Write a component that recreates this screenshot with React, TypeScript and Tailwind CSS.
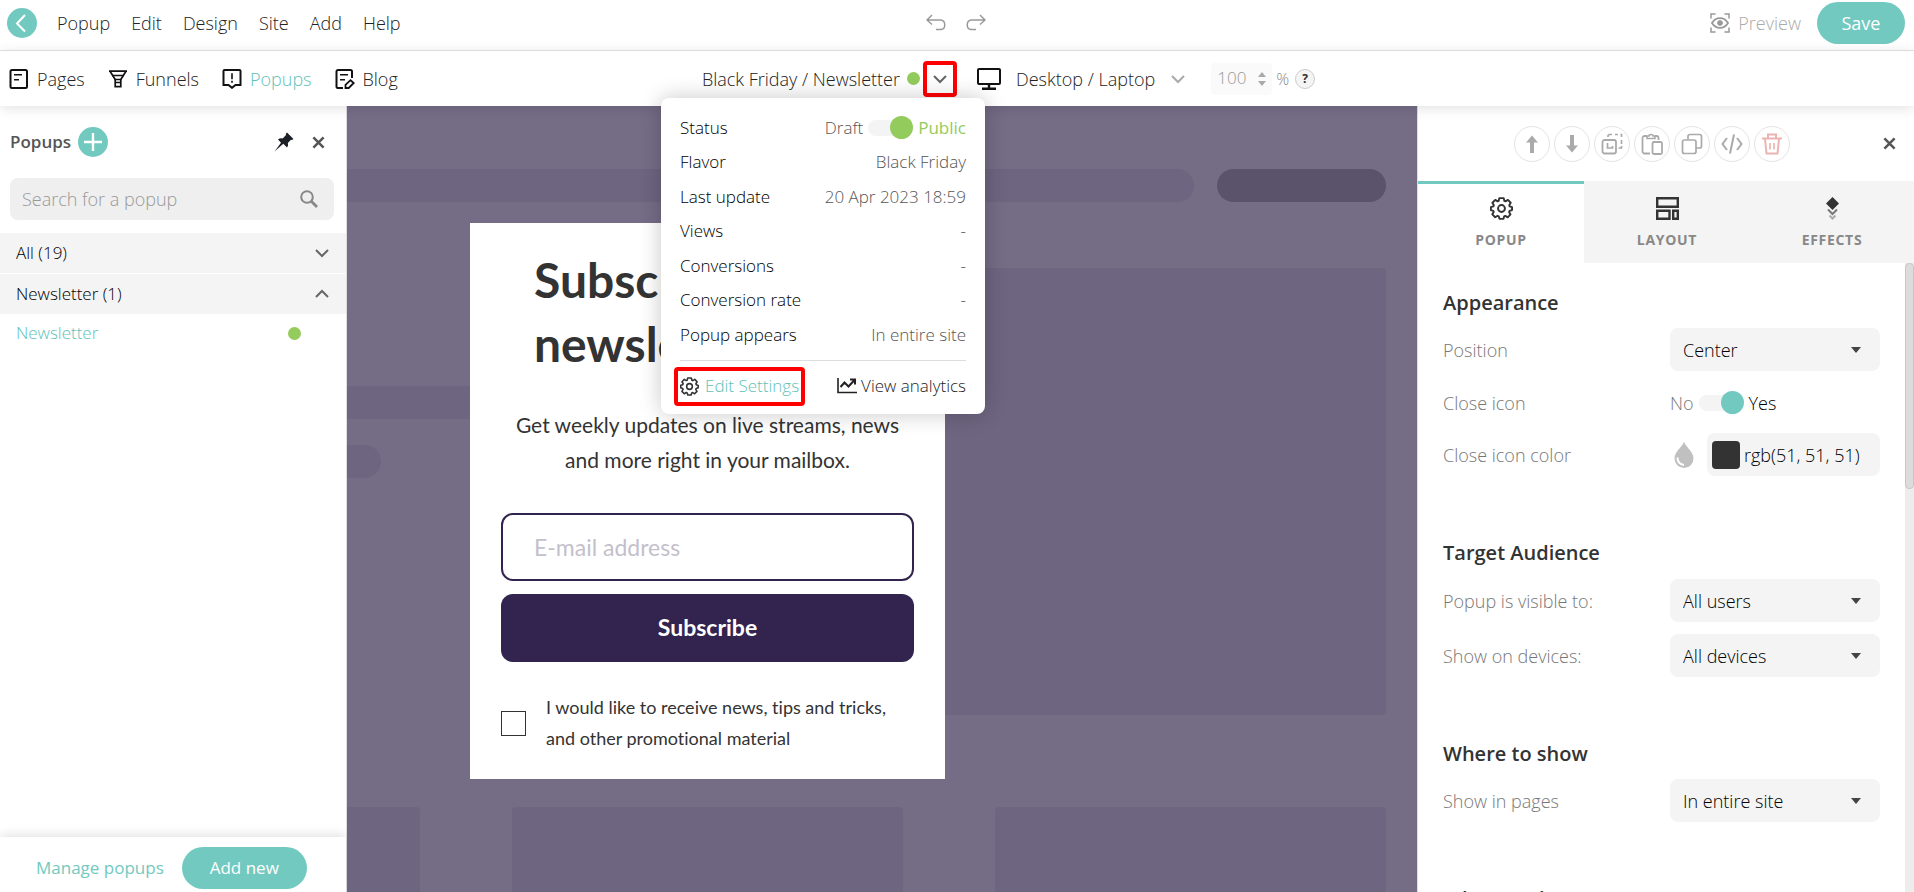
import { useState } from 'react';
import type { ReactNode } from 'react';

const menuItems = ['Popup', 'Edit', 'Design', 'Site', 'Add', 'Help'];

const stats = [
  { label: 'Flavor', value: 'Black Friday' },
  { label: 'Last update', value: '20 Apr 2023 18:59' },
  { label: 'Views', value: '-' },
  { label: 'Conversions', value: '-' },
  { label: 'Conversion rate', value: '-' },
  { label: 'Popup appears', value: 'In entire site' },
];

type IconProps = { className?: string; children: ReactNode; viewBox?: string };

function Icon({ className = 'size-5', children, viewBox = '0 0 20 20' }: IconProps) {
  return (
    <svg
      viewBox={viewBox}
      className={`shrink-0 ${className}`}
      fill="none"
      stroke="currentColor"
      strokeWidth="2"
      aria-hidden="true"
    >
      {children}
    </svg>
  );
}

function PagesIcon() {
  return (
    <Icon>
      <rect x="1.5" y="1" width="16.5" height="18" rx="1.5" />
      <path d="M5 5.8h8M5 10.8h5" strokeWidth="1.6" />
    </Icon>
  );
}

function FunnelIcon() {
  return (
    <Icon>
      <path d="M1 2.2h18M2.2 2.5l5 8v7.2h5.6v-7.2l5-8" strokeWidth="1.7" />
      <path d="M4 6.4h12M6.5 10.5h7M7.2 13.6h5.6" strokeWidth="1.5" />
    </Icon>
  );
}

function PopupIcon() {
  return (
    <Icon>
      <path d="M2.5 1h15c.6 0 1 .4 1 1v14h-5L10 18.8 6.500 16h-5V2c0-.6.4-1 1-1z" />
      <path d="M10 4.200v6M10 11.800v1.900" strokeWidth="1.600" />
    </Icon>
  );
}

function BlogIcon() {
  return (
    <Icon>
      <path d="M8 19H3a1.500 1.500 0 0 1-1.500-1.500v-15A1.500 1.500 0 0 1 3 1h12.500A1.500 1.500 0 0 1 17 2.500V9" />
      <path d="M5 5.800h8M5 10.800h5" strokeWidth="1.600" />
      <path d="M10.500 19v-3.200l5-4.600 3.200 2.800-5 5z" strokeWidth="1.800" />
    </Icon>
  );
}

function GearIcon({ className }: { className?: string }) {
  return (
    <Icon className={className} viewBox="0 0 24 24">
      <path
        d="M9.700 1.200h4.600l.7 2.900 1.100.5 2.600-1.600 2.900 3-1.500 2.500.4 1.300 2.500.8v3l-2.600.9-.5 1.200 1.500 2.500-2.900 3-2.500-1.500-1.200.5-.7 2.600H9.900l-.8-2.700-1.200-.5-2.500 1.500-3-3 1.500-2.500-.5-1.100-2.500-.8v-3.200l2.600-.8.5-1.200-1.500-2.500 3-3 2.500 1.500 1.100-.5z"
        strokeLinejoin="round"
      />
      <circle cx="12" cy="12" r="3.600" />
    </Icon>
  );
}

function Chevron({ up = false, className = '' }: { up?: boolean; className?: string }) {
  return (
    <Icon className={`w-3.5 h-2.5 ${className}`} viewBox="0 0 14 10">
      <path d={up ? 'M1 8l6-6 6 6' : 'M1 2l6 6 6-6'} />
    </Icon>
  );
}

function CloseIcon() {
  return (
    <Icon className="size-[13px]" viewBox="0 0 14 14">
      <path d="M1.500 1.500l11 11M12.500 1.500l-11 11" strokeWidth="2.700" />
    </Icon>
  );
}

type ToggleProps = { label: string; checked: boolean; onChange: (v: boolean) => void; color: string };

function Toggle({ label, checked, onChange, color }: ToggleProps) {
  return (
    <span className="relative flex items-center w-[45px] h-6">
      <input
        type="checkbox"
        role="switch"
        aria-label={label}
        checked={checked}
        onChange={(e) => onChange(e.target.checked)}
        className="appearance-none w-9 h-4 rounded-full bg-[#f4f4f4]"
      />
      <span
        className={`pointer-events-none absolute size-[23px] rounded-full ${color} ${checked ? 'right-0' : 'left-0'}`}
      />
    </span>
  );
}

function TopBar() {
  return (
    <header className="flex items-center h-[51px] pb-1 border-b border-[#e4e4e4]">
      <div className="flex-1 flex items-center pl-[7px] gap-5">
        <button aria-label="Back" className="size-[30px] rounded-full bg-[#72c9c0] text-white flex items-center justify-center">
          <Icon className="size-5">
            <path d="M13 2L5 10.500l8 8" />
          </Icon>
        </button>
        <nav className="flex gap-[21px] text-[#222]">
          {menuItems.map((item) => (
            <button key={item}>{item}</button>
          ))}
        </nav>
      </div>
      <div className="flex gap-5 text-[#999]">
        <button aria-label="Undo">
          <Icon>
            <path d="M6 2L1 7l5 4.500M1.500 7H15c5 1 5 9 0 9.500H10" strokeWidth="1.500" />
          </Icon>
        </button>
        <button aria-label="Redo">
          <Icon>
            <path d="M14 2l5 5-5 4.500M18.500 7H5C0 8 0 16 5 16.500h5" strokeWidth="1.500" />
          </Icon>
        </button>
      </div>
      <div className="flex-1 flex items-center justify-end gap-4 pr-[9px]">
        <button className="flex items-center gap-2 text-[#aaa]">
          <Icon className="size-5 text-[#999]">
            <path d="M1 5.500V1h4.500M14.500 1H19v4.500M19 14.500V19h-4.500M5.500 19H1v-4.500" strokeWidth="1.500" />
            <path d="M2 10c4-6.500 12-6.500 16 0-4 6.500-12 6.500-16 0z" strokeWidth="1.800" />
            <circle cx="10" cy="10" r="2.400" fill="currentColor" strokeWidth="1" />
          </Icon>
          Preview
        </button>
        <button className="h-[42px] w-[88px] rounded-full bg-[#72c9c0] text-white font-normal">Save</button>
      </div>
    </header>
  );
}

function StatusMenu() {
  const [isPublic, setIsPublic] = useState(true);

  return (
    <div className="absolute top-full mt-px -right-7 z-20 w-[324px] h-[316px] px-[19px] pt-[13px] rounded-lg bg-white text-[17px] shadow-[0_0_22px_rgba(0,0,0,0.22)]">
      <dl className="grid auto-rows-fr h-[242px] text-black">
        <div className="flex items-center justify-between">
          <dt>Status</dt>
          <dd className="flex items-center gap-[5px] text-[#555]">
            Draft
            <Toggle label="Public" checked={isPublic} onChange={setIsPublic} color="bg-[#93cb5d]" />
            <span className="font-normal text-[#93cb5d]">Public</span>
          </dd>
        </div>
        {stats.map((row) => (
          <div key={row.label} className="flex items-center justify-between">
            <dt>{row.label}</dt>
            <dd className="text-[#555]">{row.value}</dd>
          </div>
        ))}
      </dl>
      <div className="mt-[7px] pt-1.5 border-t border-[#ddd] flex items-center justify-between">
        <button className="-ml-1.5 h-[39px] px-0.5 border-4 border-[#f00] rounded-sm flex items-center gap-1.5 text-[#5fc2b8]">
          <GearIcon className="size-[19px] text-[#333]" />
          Edit Settings
        </button>
        <button className="flex items-center gap-1 text-[#222]">
          <Icon>
            <path d="M1 2v14.500h19" strokeWidth="1.600" />
            <path d="M3.500 11l4-4.500 4 4 6-6.500M13 3.500h5v5" />
          </Icon>
          View analytics
        </button>
      </div>
    </div>
  );
}

function EditorBar() {
  const tab = 'flex items-center gap-2';

  return (
    <div className="relative z-10 grid grid-cols-2 h-[55px] bg-white shadow-[0_2px_12px_rgba(0,0,0,0.12)]">
      <div className="flex items-center justify-between pl-[9px]">
        <nav className="flex gap-[23px] text-[#222]">
          <a href="#pages" className={tab}>
            <span className="text-[#111]"><PagesIcon /></span>
            Pages
          </a>
          <a href="#funnels" className={tab}>
            <span className="text-[#111]"><FunnelIcon /></span>
            Funnels
          </a>
          <a href="#popups" className={`${tab} text-[#5fc2b8]`}>
            <span className="text-[#111]"><PopupIcon /></span>
            Popups
          </a>
          <a href="#blog" className={tab}>
            <span className="text-[#111]"><BlogIcon /></span>
            Blog
          </a>
        </nav>
        <div className="relative flex items-center text-[#222]">
          Black Friday / Newsletter
          <span className="ml-[7px] mr-[3px] size-[13px] rounded-full bg-[#93cb5d]" />
          <button
            aria-label="Popup details"
            className="w-[34px] h-9 border-4 border-[#f00] rounded-sm flex items-center justify-center text-[#666]"
          >
            <Chevron />
          </button>
          <StatusMenu />
        </div>
      </div>
      <div className="flex items-center pl-5 text-[#222]">
        <button className="flex items-center">
          <Icon className="w-6 h-[22px] text-[#111]" viewBox="0 0 24 22">
            <rect x="1" y="1" width="22" height="15" rx="1" />
            <path d="M12 16v4M5 20.800h14" strokeWidth="2.400" />
          </Icon>
          <span className="ml-[15px] mr-4">Desktop / Laptop</span>
          <Chevron className="text-[#aaa]" />
        </button>
        <div className="ml-[26px] flex items-center w-[61px] h-8 px-1.5 rounded bg-[#fafafa]">
          <input aria-label="Zoom" defaultValue="100" disabled className="w-8 text-[17px] text-[#999]" />
          <svg viewBox="0 0 8 16" className="ml-auto w-2 h-4 fill-[#aaa]" aria-hidden="true">
            <path d="M0 6l4-5 4 5zM0 10l4 5 4-5z" />
          </svg>
        </div>
        <span className="ml-1 text-base text-[#888]">%</span>
        <button className="ml-1.5 size-5 rounded-full border border-[#ccc] bg-[#f4f4f4] text-xs font-bold text-[#333]">?</button>
      </div>
    </div>
  );
}

function Sidebar() {
  return (
    <aside className="w-[347px] shrink-0 flex flex-col border-r border-[#ddd] bg-white text-[17px]">
      <div className="flex items-center h-[72px] pl-2.5 pr-[21px]">
        <h2 className="font-semibold text-[#555]">Popups</h2>
        <button aria-label="Add popup" className="ml-[7px] size-[30px] rounded-full bg-[#72c9c0] text-white flex items-center justify-center">
          <Icon className="size-[18px]" viewBox="0 0 18 18">
            <path d="M9 0v18M0 9h18" strokeWidth="2.400" />
          </Icon>
        </button>
        <button aria-label="Pin" className="ml-auto mr-[18px] text-[#1c1f26]">
          <Icon className="size-5">
            <path
              d="M13 .5l6.500 6.500-1.500 1-1-.3-3.200 3.300c.6 1.800.2 3.200-.8 4.500l-3.700-3.700L.5 19.500 7 10.800 4 7.500c1.300-1.200 3-1.400 4.700-1L12 3l-.2-1.200z"
              fill="currentColor"
              stroke="none"
            />
          </Icon>
        </button>
        <button aria-label="Close" className="text-[#555]">
          <CloseIcon />
        </button>
      </div>
      <div className="ml-2.5 mr-3 mb-[13px] flex items-center h-[42px] px-3 pr-4 rounded-lg bg-[#efefef]">
        <input
          type="search"
          aria-label="Search for a popup"
          placeholder="Search for a popup"
          className="flex-1 min-w-0 text-lg placeholder:text-[#999] outline-none"
        />
        <Icon className="size-[18px] text-[#888]" viewBox="0 0 18 18">
          <circle cx="7" cy="7" r="5.800" />
          <path d="M11 11l6 6" strokeWidth="2.800" />
        </Icon>
      </div>
      <button className="h-10 mb-px px-4 pr-[17px] flex items-center justify-between bg-[#f4f4f4] text-black">
        All (19)
        <Chevron className="text-[#666]" />
      </button>
      <button className="h-10 px-4 pr-[17px] flex items-center justify-between bg-[#f4f4f4] text-black">
        Newsletter (1)
        <Chevron up className="text-[#666]" />
      </button>
      <a href="#newsletter" className="h-[38px] pl-4 pr-[45px] flex items-center justify-between text-[#5fc2b8]">
        Newsletter
        <span className="size-[13px] rounded-full bg-[#93cb5d]" />
      </a>
      <footer className="mt-auto h-[55px] pt-[7px] pl-9 flex items-center gap-[18px] font-normal text-[#72c9c0] shadow-[0_-2px_10px_rgba(0,0,0,0.12)]">
        <a href="#manage">Manage popups</a>
        <button className="w-[125px] h-[42px] rounded-full bg-[#72c9c0] text-white">Add new</button>
      </footer>
    </aside>
  );
}

// Dimmed outline of the site that sits behind the popup
function SiteSkeleton() {
  return (
    <div aria-hidden="true" className="[grid-area:1/1] flex flex-col px-[31px] pt-[63px]">
      <div className="flex gap-[23px]">
        <div className="flex-1 h-[33px] rounded-full bg-[#6e6580]" />
        <div className="w-[169px] h-[33px] rounded-full bg-[#5b526c]" />
      </div>
      <div className="mt-[66px] flex gap-7">
        <div className="flex-1 flex flex-col gap-[26px] pt-[118px]">
          <div className="h-[33px] rounded-full bg-[#6e6580]" />
          <div className="w-[352px] h-[33px] rounded-full bg-[#6e6580]" />
        </div>
        <div className="flex-1 h-[447px] rounded bg-[#6e6580]" />
      </div>
      <div className="mt-[92px] flex-1 min-h-0 grid grid-cols-3 gap-[92px]">
        <div className="rounded-t bg-[#6e6580]" />
        <div className="rounded-t bg-[#6e6580]" />
        <div className="rounded-t bg-[#6e6580]" />
      </div>
    </div>
  );
}

function Canvas() {
  return (
    <main className="flex-1 min-w-0 overflow-hidden bg-[#756c86] flex justify-end">
      {/* the site runs on underneath the sidebar */}
      <div className="w-[calc(100%+349px)] shrink-0 grid grid-rows-[100%]">
        <SiteSkeleton />
        <section className="[grid-area:1/1] place-self-center mt-1 w-[475px] px-[31px] pt-[25px] pb-[25px] bg-white font-[Lato,sans-serif] font-normal [font-variant-ligatures:none] text-[#333]">
          <h1 className="pl-[33px] text-5xl leading-[64px] font-bold">Subscribe to our newsletter</h1>
          <p className="mt-[31px] px-3 text-[21px] leading-[35px] text-center">
            Get weekly updates on live streams, news and more right in your mailbox.
          </p>
          <input
            type="email"
            aria-label="E-mail address"
            placeholder="E-mail address"
            className="mt-9 w-full h-[68px] px-[31px] border-2 border-[#32244e] rounded-xl text-[23px] placeholder:text-[#c4bfcc]"
          />
          <button className="mt-[13px] w-full h-[68px] rounded-xl bg-[#32244e] text-white text-[23px] font-bold">
            Subscribe
          </button>
          <label className="mt-[30px] flex items-center gap-5 text-lg leading-[31px]">
            <input type="checkbox" className="appearance-none shrink-0 size-[25px] border border-[#333]" />
            I would like to receive news, tips and tricks, and other promotional material
          </label>
        </section>
      </div>
    </main>
  );
}

type ToolProps = { label: string; children: ReactNode; className?: string };

function Tool({ label, children, className = 'text-[#aaa]' }: ToolProps) {
  return (
    <button
      aria-label={label}
      className={`size-9 rounded-full border border-[#e4e4e4] flex items-center justify-center ${className}`}
    >
      <Icon className="size-[22px]" viewBox="0 0 22 22">{children}</Icon>
    </button>
  );
}

function SelectRow({ id, label, options }: { id: string; label: string; options: string[] }) {
  return (
    <div className="flex items-center justify-between">
      <label htmlFor={id}>{label}</label>
      <div className="relative w-[210px]">
        <select id={id} className="appearance-none w-full h-[43px] px-[13px] rounded-lg bg-[#f4f4f4] text-black">
          {options.map((option) => (
            <option key={option}>{option}</option>
          ))}
        </select>
        <svg viewBox="0 0 10 6" className="pointer-events-none absolute right-[19px] top-[19px] w-2.5 h-1.5 fill-[#444]" aria-hidden="true">
          <path d="M0 0h10L5 6z" />
        </svg>
      </div>
    </div>
  );
}

function SettingsPanel() {
  const [closeIcon, setCloseIcon] = useState(true);
  const tab = 'pt-4 flex flex-col items-center gap-2.5';
  const heading = 'text-xl leading-7 font-semibold text-[#333]';

  return (
    <aside className="w-[497px] shrink-0 flex flex-col border-l border-[#ddd] bg-white">
      <div className="h-[75px] flex items-center">
        <div className="ml-24 flex gap-1">
          <Tool label="Move up">
            <path d="M11 20V6" strokeWidth="4" />
            <path d="M5 9.500l6-7 6 7z" fill="currentColor" stroke="none" />
          </Tool>
          <Tool label="Move down">
            <path d="M11 2v14" strokeWidth="4" />
            <path d="M5 12.500l6 7 6-7z" fill="currentColor" stroke="none" />
          </Tool>
          <Tool label="Cut">
            <rect x="1.500" y="7" width="13.500" height="13.500" rx="2" strokeWidth="1.800" />
            <path d="M7 4V3c0-.8.7-1.500 1.500-1.500H11M14 1.500h3M19.500 1.500h1V4M20.500 7v4M20.500 13v2h-3M6.500 10v5h5v-2" strokeWidth="1.700" />
          </Tool>
          <Tool label="Paste">
            <path d="M9 20.500H3.500A2 2 0 0 1 1.500 18.500V5a2 2 0 0 1 2-2H6M14 3h1.500a2 2 0 0 1 2 2v2" strokeWidth="1.800" />
            <path d="M6 5.500h8V3h-2c0-2-4-2-4 0H6z" strokeWidth="1.600" />
            <rect x="11.500" y="9" width="9.500" height="12" rx="1.500" strokeWidth="1.800" />
          </Tool>
          <Tool label="Duplicate">
            <rect x="1.500" y="7" width="13.500" height="13.500" rx="2" strokeWidth="1.700" />
            <path d="M7 6.500V3.500c0-1 .8-2 2-2h9.500c1 0 2 1 2 2V13c0 1-1 2-2 2H15" strokeWidth="1.700" />
          </Tool>
          <Tool label="Code">
            <path d="M6 5l-4.500 6L6 17M16 5l4.500 6-4.500 6M13 1.500L9 20.500" />
          </Tool>
          <Tool label="Delete" className="text-[#ecb3b1]">
            <path d="M1 5.500h20M4 6l1.500 14.500h11L18 6M7 5V1.500h8V5" />
            <path d="M9 10v6.500M13 10v6.500" strokeWidth="1.600" />
          </Tool>
        </div>
        <button aria-label="Close panel" className="ml-auto mr-[18px] text-[#555]">
          <CloseIcon />
        </button>
      </div>

      <div role="tablist" className="grid grid-cols-[166px_166px_1fr] h-[82px] bg-[#f4f4f4] text-sm leading-5 font-bold text-[#888] tracking-wider">
        <button role="tab" aria-selected="true" className="pt-[13px] flex flex-col items-center gap-2.5 border-t-3 border-[#72c9c0] bg-white">
          <GearIcon className="size-[23px] text-[#333]" />
          POPUP
        </button>
        <button role="tab" aria-selected="false" className={tab}>
          <Icon className="size-[23px] text-[#333]" viewBox="0 0 23 23">
            <path d="M1.200 1.200h20.600v8.500H1.200zM1.200 13.700h12.300v8H1.200zM17.200 13.700h4.600v8h-4.600z" strokeWidth="2.400" />
          </Icon>
          LAYOUT
        </button>
        <button role="tab" aria-selected="false" className={tab}>
          <Icon className="size-[23px] text-[#333]" viewBox="0 0 23 23">
            <path d="M11.500 0l6.500 6.500-6.500 6.500L5 6.500z" fill="currentColor" stroke="none" />
            <path d="M7 12.500l4.500 4.500 4.500-4.500" stroke="#777" />
            <path d="M8.500 18.500l3 3 3-3" stroke="#aaa" />
          </Icon>
          EFFECTS
        </button>
      </div>

      <div className="flex-1 min-h-0 flex">
        <div className="flex-1 overflow-hidden pl-[25px] pr-[25px] pt-[26px] text-[#777] text-lg">
          <h3 className={heading}>Appearance</h3>
          <div className="mt-[11px]">
            <SelectRow id="position" label="Position" options={['Center', 'Top', 'Bottom']} />
          </div>
          <div className="mt-2.5 h-[43px] flex items-center justify-between">
            <span>Close icon</span>
            <div className="w-[210px] flex items-center gap-[5px]">
              No
              <Toggle label="Close icon" checked={closeIcon} onChange={setCloseIcon} color="bg-[#72c9c0]" />
              <span className="text-black">Yes</span>
            </div>
          </div>
          <div className="mt-[9px] flex items-center justify-between">
            <label htmlFor="icon-color">Close icon color</label>
            <div className="w-[210px] flex items-center justify-between">
              <svg viewBox="0 0 20 26" className="ml-1 w-5 h-[26px]" aria-hidden="true">
                <path d="M10 0c3 6 9.500 10 9.500 16.500a9.500 9.500 0 0 1-19 0C.5 10 7 6 10 0z" fill="#c0c0c0" />
                <path d="M3.500 15.500c0 4 2.500 7 6.500 7.500" fill="none" stroke="#fff" strokeWidth="2" />
              </svg>
              <div className="w-[173px] h-[43px] pl-[5px] flex items-center gap-1 rounded-lg bg-[#f4f4f4]">
                <span className="size-7 shrink-0 rounded bg-[#333]" />
                <input id="icon-color" defaultValue="rgb(51, 51, 51)" className="w-full min-w-0 text-black" />
              </div>
            </div>
          </div>

          <h3 className={`mt-[63px] ${heading}`}>Target Audience</h3>
          <div className="mt-3 flex flex-col gap-3">
            <SelectRow id="audience" label="Popup is visible to:" options={['All users', 'New users']} />
            <SelectRow id="devices" label="Show on devices:" options={['All devices', 'Desktop', 'Mobile']} />
          </div>

          <h3 className={`mt-[63px] ${heading}`}>Where to show</h3>
          <div className="mt-[11px]">
            <SelectRow id="pages" label="Show in pages" options={['In entire site', 'Selected pages']} />
          </div>

          <h3 className={`mt-[63px] ${heading}`}>When to show</h3>
        </div>
        <div className="w-[9px] bg-[#ededed]">
          <div className="h-[226px] rounded border border-[#c8c8c8] bg-[#dcdcdc]" />
        </div>
      </div>
    </aside>
  );
}

export default function App() {
  return (
    <div className="h-screen flex flex-col overflow-hidden bg-white font-['Open_Sans','Noto_Sans',sans-serif] font-light text-lg">
      <TopBar />
      <EditorBar />
      <div className="flex-1 min-h-0 flex">
        <Sidebar />
        <Canvas />
        <SettingsPanel />
      </div>
    </div>
  );
}
